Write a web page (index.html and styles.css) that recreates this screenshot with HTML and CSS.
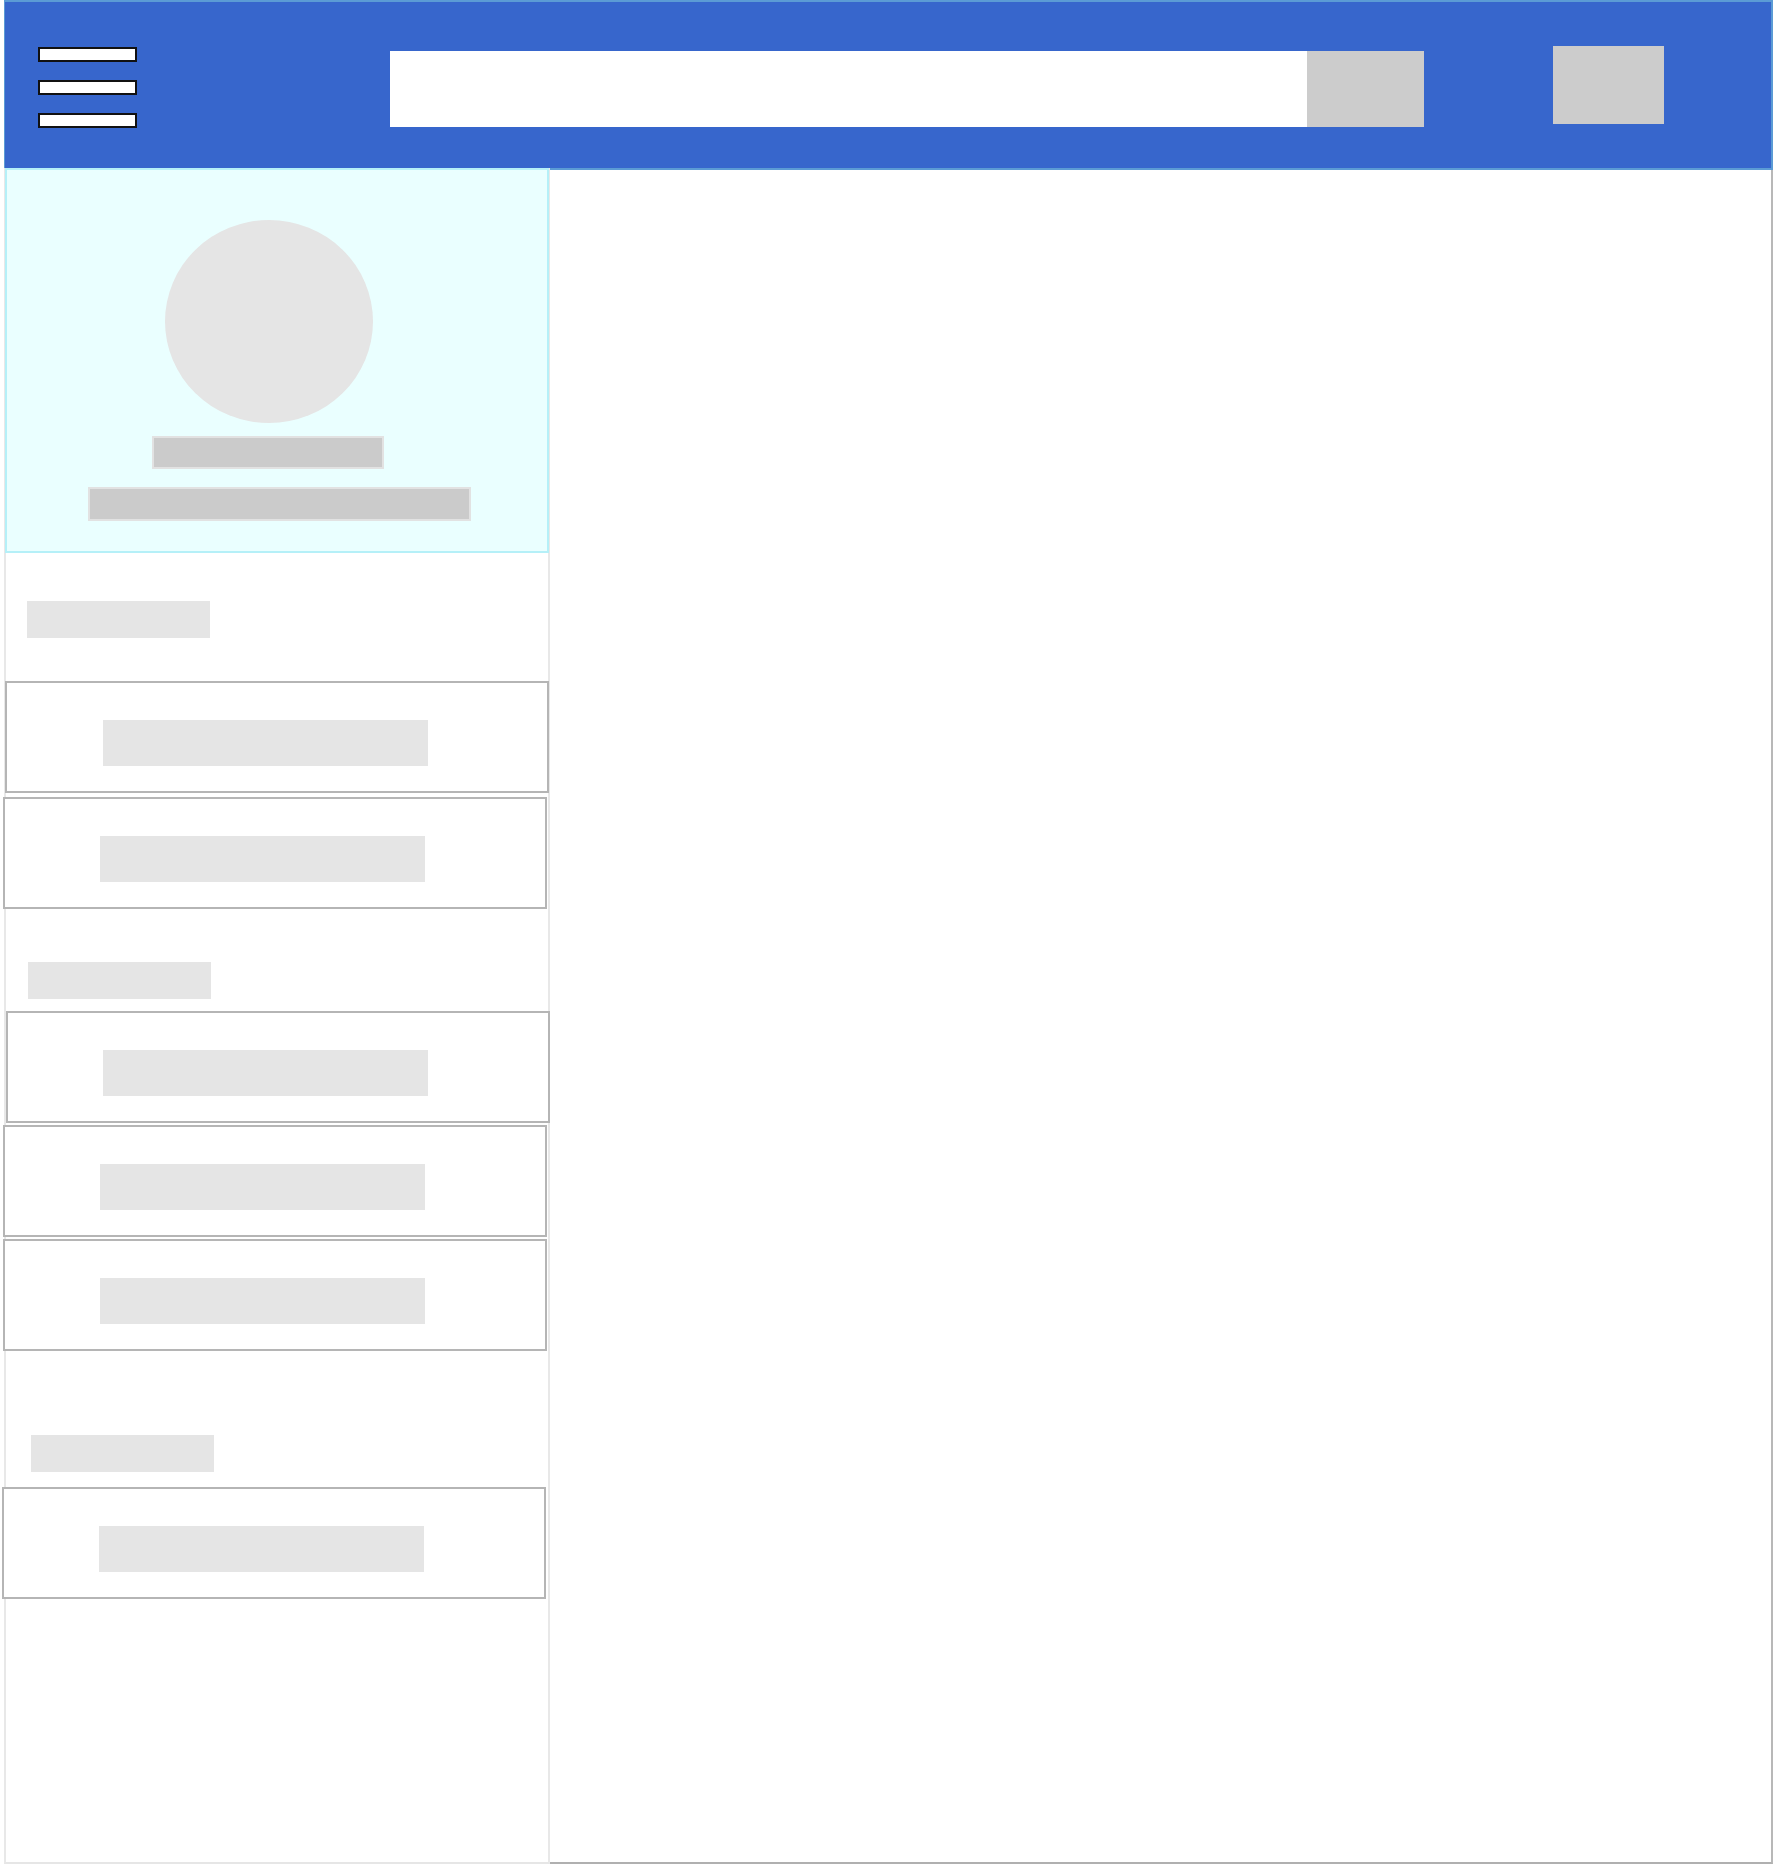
FILE: index.html
```html
<!DOCTYPE html>
<html lang="en">
<head>
<meta charset="utf-8">
<title>Profile layout</title>
<link rel="stylesheet" href="styles.css">
</head>
<body>
<div class="page">
  <header class="topbar">
    <div class="hamburger">
      <span class="hamburger-bar"></span>
      <span class="hamburger-bar"></span>
      <span class="hamburger-bar"></span>
    </div>
    <form class="search">
      <div class="search-input"></div>
      <div class="search-button"></div>
    </form>
    <div class="account-box"></div>
  </header>
  <div class="content-row">
    <aside class="sidebar">
      <section class="profile">
        <div class="avatar"></div>
        <div class="profile-name"></div>
        <div class="profile-bio"></div>
      </section>

      <div class="section-title section-title-1"></div>
      <div class="nav-item nav-item-1"><div class="nav-label"></div></div>
      <div class="nav-item nav-item-2"><div class="nav-label"></div></div>

      <div class="section-title section-title-2"></div>
      <div class="nav-item nav-item-3"><div class="nav-label"></div></div>
      <div class="nav-item nav-item-4"><div class="nav-label"></div></div>
      <div class="nav-item nav-item-5"><div class="nav-label"></div></div>

      <div class="section-title section-title-3"></div>
      <div class="nav-item nav-item-6"><div class="nav-label"></div></div>
    </aside>
    <main class="main"></main>
  </div>
</div>
</body>
</html>
```

FILE: styles.css
```css
* {
  box-sizing: border-box;
}

html,
body {
  margin: 0;
  padding: 0;
  background: #ffffff;
  overflow: hidden;
  font-family: "Liberation Sans", Arial, sans-serif;
}

.page {
  width: 1769px;
  margin-left: 4px;
}

/* ---------- Top bar ---------- */
.topbar {
  display: flex;
  align-items: flex-start;
  height: 170px;
  background: #3766cc;
  border: 2px solid #5b9bd5;
  border-left-width: 1px;
}

.hamburger {
  display: flex;
  flex-direction: column;
  gap: 18px;
  margin-left: 33px;
  margin-top: 45px;
}

.hamburger-bar {
  display: block;
  width: 99px;
  height: 15px;
  background: #ffffff;
  border: 2px solid #111111;
}

.search {
  display: flex;
  margin: 49px 0 0 253px;
}

.search-input {
  width: 917px;
  height: 76px;
  background: #ffffff;
}

.search-button {
  width: 117px;
  height: 76px;
  background: #cccccc;
}

.account-box {
  width: 111px;
  height: 78px;
  margin: 44px 0 0 129px;
  background: #cccccc;
}

/* ---------- Content row ---------- */
.content-row {
  display: flex;
  height: 1694px;
}

.sidebar {
  display: flex;
  flex-direction: column;
  align-items: flex-start;
  flex: 0 0 546px;
  width: 546px;
  height: 1696px;
  margin-top: -2px;
  border-left: 2px solid #e8e8e8;
  border-right: 2px solid #e8e8e8;
  border-bottom: 2px solid #e6e6e6;
}

.profile {
  display: flex;
  flex-direction: column;
  align-items: flex-start;
  width: 544px;
  height: 385px;
  margin-left: -1px;
  background: #eaffff;
  border: 2px solid #b5f0f8;
}

.avatar {
  width: 208px;
  height: 203px;
  margin: 50px 0 0 158px;
  border-radius: 50%;
  background: #e5e5e5;
}

.profile-name {
  width: 232px;
  height: 33px;
  margin: 13px 0 0 145px;
  background: #cbcbcb;
  border: 2px solid #e2e2e2;
}

.profile-bio {
  width: 383px;
  height: 34px;
  margin: 18px 0 0 81px;
  background: #cbcbcb;
  border: 2px solid #e2e2e2;
}

/* ---------- Section titles ---------- */
.section-title {
  width: 183px;
  height: 37px;
  background: #e5e5e5;
}

.section-title-1 {
  margin: 48px 0 0 21px;
}

.section-title-2 {
  margin: 53px 0 0 22px;
}

.section-title-3 {
  margin: 84px 0 0 25px;
}

/* ---------- Nav items ---------- */
.nav-item {
  width: 544px;
  height: 112px;
  background: #ffffff;
  border: 2px solid #b5b5b5;
}

.nav-label {
  width: 325px;
  height: 46px;
  margin: 37px 0 0 95px;
  background: #e5e5e5;
}

.nav-item-1 {
  margin: 43px 0 0 -1px;
}

.nav-item-1 .nav-label {
  margin-left: 96px;
}

.nav-item-2 {
  margin: 4px 0 0 -3px;
}

.nav-item-3 {
  margin: 12px 0 0 0;
}

.nav-item-4 {
  margin: 2px 0 0 -3px;
}

.nav-item-5 {
  margin: 2px 0 0 -3px;
}

.nav-item-6 {
  margin: 84px 0 0 -4px;
}

.section-title-3 + .nav-item-6 {
  margin-top: 15px;
}

/* ---------- Main ---------- */
.main {
  flex: 1 1 auto;
  height: 1694px;
  background: #ffffff;
  border-right: 2px solid #b8b8b8;
  border-bottom: 2px solid #b0b0b0;
}
```
